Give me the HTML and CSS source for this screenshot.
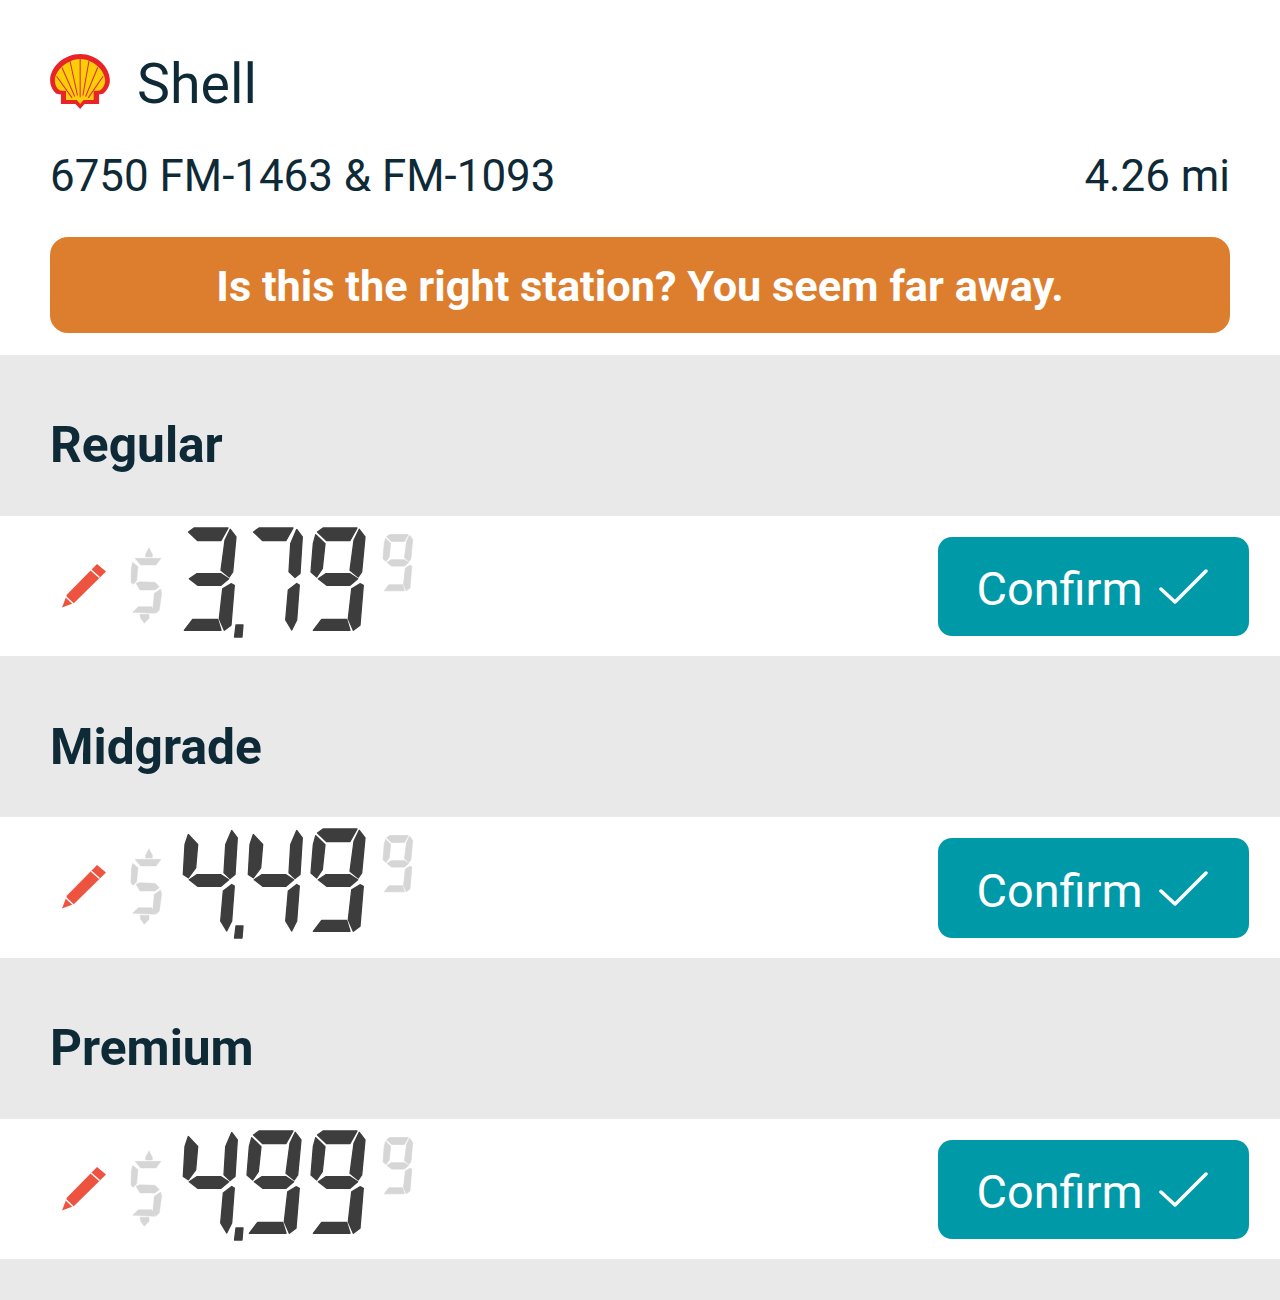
FILE: index.html
```html
<!DOCTYPE html>
<html lang="en">
<head>
    <meta charset="UTF-8">
    <meta name="viewport" content="width=device-width, initial-scale=1.0">
    <title>Confirm prices</title>
    <link rel="stylesheet" href="styles.css">
</head>
<body>
    <!-- LCD segments and small icons, reused by every row -->
    <svg class="defs" aria-hidden="true">
        <defs>
            <polygon id="seg-a" points="12,1 46,1 39,13.5 15.5,13.5 6.5,5"/>
            <polygon id="seg-b" points="48.3,2.3 54,10 50.7,45 47.3,50 39,43.3 43,13.3"/>
            <polygon id="seg-b-thin" points="49.7,2.5 55.3,9.8 53,46.5 48,50.5 42,44.8 43.7,16.5"/>
            <polygon id="seg-c" points="49,56.7 52.3,58.3 49,98.3 42.3,103.3 37.3,91.7 40.7,61.7"/>
            <polygon id="seg-c-thin" points="49.7,56.5 52.3,58 49.7,93 44.7,103 38.7,93 41.3,63"/>
            <polygon id="seg-d" points="2.3,103.3 10.7,92.3 35.7,92.3 39,103.3"/>
            <polygon id="seg-f" points="4.7,7.7 14,16.7 11.3,41.7 5.7,50 0,45 2.3,16.7"/>
            <polygon id="seg-f-thin" points="6.3,6.5 15.7,16.5 13.7,39.8 6.3,49.8 1.3,46.5 3,16.5"/>
            <polygon id="seg-g" points="7.3,51.7 14.7,46.7 39,46.7 46.7,51.7 39,58.3 15.7,58.3"/>
            <g id="d3"><use href="#seg-a"/><use href="#seg-b"/><use href="#seg-g"/><use href="#seg-c"/><use href="#seg-d"/></g>
            <g id="d4"><use href="#seg-f-thin"/><use href="#seg-b-thin"/><use href="#seg-g"/><use href="#seg-c-thin"/></g>
            <g id="d7"><use href="#seg-a"/><use href="#seg-b-thin"/><use href="#seg-c-thin"/></g>
            <g id="d9"><use href="#seg-a"/><use href="#seg-f"/><use href="#seg-b"/><use href="#seg-g"/><use href="#seg-c"/><use href="#seg-d"/></g>
            <polygon id="comma" points="106,99 113,99 112,111 104.5,111"/>
            <g id="lcd-back" class="lcd-off">
                <g transform="translate(-80,-11) scale(.3333)">
                    <polygon points="297,98 307,118 307,126 287,126 287,118"/>
                    <polygon points="255,130 333,130 318,150 272,150"/>
                    <polygon points="248,142 264,155 260,197 250,208 243,202 244,160"/>
                    <polygon points="258,205 270,200 315,202 328,215 315,225 270,225"/>
                    <polygon points="332,222 335,235 328,285 318,295 308,285 313,235"/>
                    <polygon points="248,292 265,275 305,275 315,295"/>
                    <polygon points="270,298 297,298 297,310 283,325 272,310"/>
                </g>
                <use href="#d9" transform="translate(253,8) scale(.55)"/>
            </g>
            <g id="pencil">
                <polygon points="0,43.5 5,30.5 35,0 44,7.5 12,39"/>
                <path class="pencil-line" d="M3.5 32.5 L11 39.5 M29 6 L37.5 13.5"/>
            </g>
            <path id="check" d="M2 20 L16 33 L47 2"/>
        </defs>
    </svg>

    <header class="station">
        <div class="brand">
            <svg class="logo" viewBox="33 42 177 163">
                <path class="shell-red" d="M122 42 C170 42 210 80 210 120 C210 136 202 150 190 160 L178 162 L178 190 L135 190 L122 205 L108 190 L65 190 L65 162 L52 160 C40 150 33 136 33 120 C33 80 75 42 122 42 Z"/>
                <path class="shell-yellow" d="M122 57 C160 57 195 90 196 120 C196 132 190 145 180 150 L162 152 L162 178 L132 178 L122 190 L112 178 L80 178 L80 152 L62 150 C52 145 47 132 47 120 C48 90 85 57 122 57 Z"/>
                <path class="shell-rays" d="M122 57 L122 170 M92 63 L114 165 M148 63 L130 165 M68 82 L106 168 M174 82 L138 168 M52 108 L98 172 M190 108 L146 172"/>
            </svg>
            <h1>Shell</h1>
        </div>
        <div class="address">
            <span>6750 FM-1463 &amp; FM-1093</span>
            <span>4.26 mi</span>
        </div>
        <div class="warning">Is this the right station? You seem far away.</div>
    </header>

    <section class="grade">Regular</section>
    <div class="price-row">
        <svg class="pencil" viewBox="0 0 44 44"><use href="#pencil"/></svg>
        <svg class="lcd" viewBox="0 1 284 120" role="img" aria-label="$3.799">
            <use href="#lcd-back"/>
            <use href="#d3" x="52" y="1"/><use href="#comma"/><use href="#d7" x="117" y="1"/><use href="#d9" x="181" y="1"/>
        </svg>
        <button class="confirm"><span class="confirm-label">Confirm</span> <svg class="check" viewBox="0 0 49 35"><use href="#check"/></svg></button>
    </div>

    <section class="grade">Midgrade</section>
    <div class="price-row">
        <svg class="pencil" viewBox="0 0 44 44"><use href="#pencil"/></svg>
        <svg class="lcd" viewBox="0 1 284 120" role="img" aria-label="$4.499">
            <use href="#lcd-back"/>
            <use href="#d4" x="52" y="1"/><use href="#comma"/><use href="#d4" x="117" y="1"/><use href="#d9" x="181" y="1"/>
        </svg>
        <button class="confirm"><span class="confirm-label">Confirm</span> <svg class="check" viewBox="0 0 49 35"><use href="#check"/></svg></button>
    </div>

    <section class="grade">Premium</section>
    <div class="price-row">
        <svg class="pencil" viewBox="0 0 44 44"><use href="#pencil"/></svg>
        <svg class="lcd" viewBox="0 1 284 120" role="img" aria-label="$4.999">
            <use href="#lcd-back"/>
            <use href="#d4" x="52" y="1"/><use href="#comma"/><use href="#d9" x="117" y="1"/><use href="#d9" x="181" y="1"/>
        </svg>
        <button class="confirm"><span class="confirm-label">Confirm</span> <svg class="check" viewBox="0 0 49 35"><use href="#check"/></svg></button>
    </div>

    <div class="grade-end"></div>
</body>
</html>
```

FILE: styles.css
```css
body {
    margin: 0;
    font-family: Roboto, Arial, sans-serif;
    color: #0e2a37;
    background-color: #fff;
}
.defs {
    display: block;
    width: 0;
    height: 0;
}
.station {
    height: 354.5px;
    padding: 53px 50px 0;
    box-sizing: border-box;
}
.brand {
    display: flex;
    align-items: center;
    gap: 27px;
    height: 56px;
}
.logo {
    width: 60px;
    height: 55px;
}
.shell-red {
    fill: #e6242a;
}
.shell-yellow {
    fill: #fbce07;
}
.shell-rays {
    fill: none;
    stroke: #e6242a;
    stroke-width: 3;
}
.brand h1 {
    margin: 6px 0 0;
    font-size: 55.5px;
    font-weight: 400;
}
.address {
    display: flex;
    justify-content: space-between;
    margin-top: 40px;
    font-size: 43.9px;
    line-height: 54px;
}
.warning {
    margin-top: 34px;
    height: 95.5px;
    line-height: 100px;
    text-align: center;
    font-size: 43.3px;
    font-weight: 700;
    color: #fff;
    background-color: #dd7e2f;
    border-radius: 18px;
}
.grade {
    height: 161px;
    padding: 20px 0 0 50px;
    box-sizing: border-box;
    display: flex;
    align-items: center;
    font-size: 49.7px;
    font-weight: 700;
    background-color: #e9e9e9;
}
.grade-end {
    height: 42px;
    background-color: #e9e9e9;
}
.price-row {
    height: 140.5px;
    box-sizing: border-box;
    display: flex;
    align-items: center;
    padding: 1.5px 31px 0 62px;
}
.pencil {
    width: 44px;
    height: 44px;
    margin-bottom: 2px;
    fill: #ee5340;
}
.pencil-line {
    fill: none;
    stroke: #fff;
    stroke-width: 1.5;
}
.lcd {
    width: 284px;
    height: 120px;
    margin-left: 24px;
    fill: #3d3d3d;
    stroke: #3d3d3d;
    stroke-width: 1.3;
    stroke-linejoin: round;
}
.lcd-off {
    fill: #d6d6d6;
    stroke: #d6d6d6;
}
.confirm {
    margin-left: auto;
    width: 311px;
    height: 99.5px;
    display: flex;
    align-items: center;
    justify-content: center;
    gap: 16px;
    padding: 0 3px 0 0;
    border: none;
    border-radius: 14px;
    font-family: inherit;
    font-size: 46.9px;
    color: #fff;
    background-color: #0099a8;
}
.confirm-label {
    padding-top: 4px;
}
.check {
    width: 49px;
    height: 35px;
    fill: none;
    stroke: #fff;
    stroke-width: 3.5;
    stroke-linecap: round;
    stroke-linejoin: round;
}
```
